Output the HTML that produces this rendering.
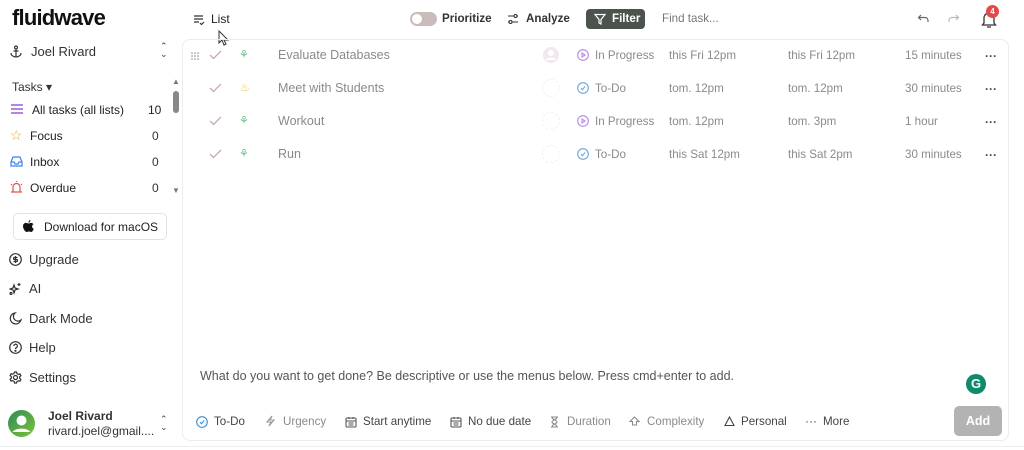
<!DOCTYPE html>
<html><head><meta charset="utf-8"><style>
*{margin:0;padding:0;box-sizing:border-box}
body{width:1024px;height:450px;background:#fff;font-family:"Liberation Sans",sans-serif;font-size:12px;color:#222;position:relative;overflow:hidden}
.a{position:absolute;white-space:nowrap}
.g{color:#8a8a8a}
.d{color:#444}
.t{font-size:11.6px}
svg{display:block}
</style></head><body>
<div class="a" style="left:12px;top:5px;font-size:22px;font-weight:bold;letter-spacing:-0.8px;color:#111">fluidwave</div>
<svg class="a" style="left:193px;top:14px" width="12" height="12" viewBox="0 0 12 12" fill="none" stroke="#333" stroke-width="1.2"><path d="M1 2h9M1 5h9M1 8h5M7 9l1.5 1.5L11 8"/></svg>
<div class="a" style="left:211px;top:12px;font-size:12px;color:#222">List</div>
<svg class="a" style="left:218px;top:30px" width="12" height="16" viewBox="0 0 12 16"><path d="M1 1v12l3-3 2 5 2-1-2-4h4z" fill="#fff" stroke="#333" stroke-width="1"/></svg>
<div class="a" style="left:410px;top:12px;width:27px;height:14px;border-radius:7px;background:#cbbcbc"></div>
<div class="a" style="left:412px;top:14px;width:10px;height:10px;border-radius:5px;background:#fff"></div>
<div class="a t" style="left:442px;top:12px;font-weight:bold;color:#333">Prioritize</div>
<svg class="a" style="left:507px;top:13px" width="12" height="12" viewBox="0 0 12 12" fill="none" stroke="#333" stroke-width="1.1"><path d="M1 3h6M10 3h1M1 9h1M5 9h6"/><circle cx="8.5" cy="3" r="1.5"/><circle cx="3.5" cy="9" r="1.5"/></svg>
<div class="a t" style="left:526px;top:12px;font-weight:bold;color:#333">Analyze</div>
<div class="a" style="left:586px;top:9px;width:59px;height:20px;border-radius:4px;background:#4b534c"></div>
<svg class="a" style="left:594px;top:13px" width="12" height="12" viewBox="0 0 12 12" fill="none" stroke="#fff" stroke-width="1.2"><path d="M1 1.5h10L7 6.5V11L5 10V6.5z"/></svg>
<div class="a t" style="left:612px;top:12px;font-weight:bold;color:#fff">Filter</div>
<div class="a t" style="left:662px;top:12px;color:#777">Find task...</div>
<svg class="a" style="left:917px;top:13px" width="13" height="12" viewBox="0 0 13 12" fill="none" stroke="#666" stroke-width="1.2"><path d="M4 2L1.5 4.5 4 7M1.5 4.5H8a3 3 0 013 3V9"/></svg>
<svg class="a" style="left:947px;top:13px" width="13" height="12" viewBox="0 0 13 12" fill="none" stroke="#bbb" stroke-width="1.2"><path d="M9 2l2.5 2.5L9 7M11.5 4.5H5a3 3 0 00-3 3V9"/></svg>
<svg class="a" style="left:980px;top:10px" width="18" height="19" viewBox="0 0 18 19" fill="none" stroke="#333" stroke-width="1.3"><path d="M4 13V8a5 5 0 0110 0v5l1.5 2h-13zM7 17h4"/></svg>
<div class="a" style="left:986px;top:5px;width:13px;height:13px;border-radius:7px;background:#e24a4a;color:#fff;font-size:8px;font-weight:bold;text-align:center;line-height:13px">4</div>
<!-- sidebar -->
<svg class="a" style="left:10px;top:45px" width="12" height="13" viewBox="0 0 12 13" fill="none" stroke="#333" stroke-width="1.2"><circle cx="6" cy="2.5" r="1.5"/><path d="M6 4v8M1 8a5 4 0 0010 0M3.5 6h5"/></svg>
<div class="a" style="left:31px;top:44px;font-size:13px;color:#333">Joel Rivard</div>
<div class="a" style="left:160px;top:42px;font-size:9px;line-height:8px;color:#444">⌃<br>⌄</div>
<div class="a" style="left:12px;top:80px;color:#333">Tasks ▾</div>
<div class="a" style="left:172px;top:77px;font-size:8px;color:#777">▲</div>
<div class="a" style="left:173px;top:91px;width:6px;height:22px;border-radius:3px;background:#888"></div>
<div class="a" style="left:172px;top:186px;font-size:8px;color:#777">▼</div>
<svg class="a" style="left:11px;top:104px" width="12" height="10" viewBox="0 0 12 10" stroke="#9a5fd6" stroke-width="1.5"><path d="M0 1h12M0 5h12M0 9h12"/></svg>
<div class="a" style="left:32px;top:103px;color:#222">All tasks (all lists)</div><div class="a" style="left:148px;top:103px;color:#222">10</div>
<div class="a" style="left:10px;top:127px;font-size:14px;color:#e0b020">☆</div>
<div class="a" style="left:30px;top:129px;color:#222">Focus</div><div class="a" style="left:152px;top:129px;color:#333">0</div>
<svg class="a" style="left:10px;top:156px" width="13" height="11" viewBox="0 0 13 11" fill="none" stroke="#3b82f6" stroke-width="1.2"><path d="M1 6l2-5h7l2 5v4H1zM1 6h3l1 2h3l1-2h3"/></svg>
<div class="a" style="left:30px;top:155px;color:#222">Inbox</div><div class="a" style="left:152px;top:155px;color:#333">0</div>
<svg class="a" style="left:10px;top:181px" width="13" height="12" viewBox="0 0 13 12" fill="none" stroke="#e05050" stroke-width="1.2"><path d="M3 11V6a3.5 3.5 0 017 0v5M1 11h11M6.5 1V0M1 3l1 1M12 3l-1 1"/></svg>
<div class="a" style="left:30px;top:181px;color:#222">Overdue</div><div class="a" style="left:152px;top:181px;color:#333">0</div>
<div class="a" style="left:13px;top:213px;width:154px;height:27px;border:1px solid #e3e3e3;border-radius:5px"></div>
<svg class="a" style="left:23px;top:220px" width="11" height="13" viewBox="0 0 11 13"><path d="M7.5 0c0 1.5-1 2.5-2 2.7C5.4 1.3 6.5.2 7.5 0zM5.5 3.5c1 0 1.7-.6 2.6-.6 1 0 1.8.5 2.3 1.3-2 1.1-1.600 3.9.4 4.6-.4 1.2-1.4 3.2-2.5 3.2-.9 0-1.1-.5-2.3-.5S4.6 12 3.7 12C2.4 12 0 9 0 6.300 0 4 1.5 2.9 2.9 2.9c1 0 1.800.6 2.6.6z" fill="#111"/></svg>
<div class="a" style="left:44px;top:220px;font-size:12px;color:#222">Download for macOS</div>
<svg class="a" style="left:9px;top:253px" width="13" height="13" viewBox="0 0 13 13" fill="none" stroke="#333" stroke-width="1.2"><circle cx="6.5" cy="6.5" r="5.8"/><path d="M8.5 4.5H5.5a1 1 0 000 2h2a1 1 0 010 2H4.5M6.5 3v7"/></svg>
<div class="a" style="left:29px;top:252px;font-size:13px;color:#333">Upgrade</div>
<svg class="a" style="left:9px;top:282px" width="13" height="13" viewBox="0 0 13 13" fill="none" stroke="#333" stroke-width="1.2"><path d="M5 3l1 3 3 1-3 1-1 3-1-3-3-1 3-1zM10 1v3M8.5 2.5h3"/><circle cx="2" cy="11.5" r="1"/></svg>
<div class="a" style="left:29px;top:281px;font-size:13px;color:#333">AI</div>
<svg class="a" style="left:9px;top:312px" width="13" height="13" viewBox="0 0 13 13" fill="none" stroke="#333" stroke-width="1.2"><path d="M6 1a5.5 5.5 0 106 7A4.5 4.5 0 016 1z"/></svg>
<div class="a" style="left:29px;top:311px;font-size:13px;color:#333">Dark Mode</div>
<svg class="a" style="left:9px;top:341px" width="13" height="13" viewBox="0 0 13 13" fill="none" stroke="#333" stroke-width="1.2"><circle cx="6.5" cy="6.5" r="5.8"/><path d="M4.8 5a1.8 1.8 0 113 1.3c-.8.5-1.3.8-1.3 1.7"/><circle cx="6.5" cy="9.8" r=".5" fill="#333"/></svg>
<div class="a" style="left:29px;top:340px;font-size:13px;color:#333">Help</div>
<svg class="a" style="left:9px;top:371px" width="13" height="13" viewBox="0 0 13 13" fill="none" stroke="#333" stroke-width="1.2"><circle cx="6.5" cy="6.5" r="2"/><path d="M5.5 1h2l.4 1.6 1.4.8 1.6-.5 1 1.7-1.2 1.2v1.6l1.2 1.2-1 1.7-1.6-.5-1.4.8L7.5 12h-2l-.4-1.6-1.4-.8-1.6.5-1-1.7 1.2-1.2V5.6L1.1 4.4l1-1.7 1.6.5 1.4-.8z"/></svg>
<div class="a" style="left:29px;top:370px;font-size:13px;color:#333">Settings</div>
<svg class="a" style="left:8px;top:410px" width="27" height="27" viewBox="0 0 27 27"><defs><linearGradient id="gg" x1="0" y1="0" x2="1" y2="1"><stop offset="0" stop-color="#2e8b57"/><stop offset="1" stop-color="#7cc33a"/></linearGradient></defs><circle cx="13.5" cy="13.5" r="13.5" fill="url(#gg)"/><circle cx="13.5" cy="10.5" r="5" fill="#fff"/><path d="M4.5 22a10 6 0 0118 0" fill="#fff"/></svg>
<div class="a" style="left:48px;top:409px;font-size:12px;font-weight:bold;color:#333">Joel Rivard</div>
<div class="a" style="left:48px;top:424px;font-size:12px;color:#333">rivard.joel@gmail....</div>
<div class="a" style="left:160px;top:415px;font-size:9px;line-height:8px;color:#444">⌃<br>⌄</div>
<!-- main panel -->
<div class="a" style="left:182px;top:39px;width:827px;height:402px;border:1px solid #ececec;border-radius:8px"></div>
<div class="a" style="left:0;top:446px;width:1024px;height:1px;background:#eee"></div>
<svg class="a" style="left:191px;top:52px" width="8" height="8" viewBox="0 0 8 8" fill="#888"><circle cx="1" cy="1" r=".8"/><circle cx="4" cy="1" r=".8"/><circle cx="7" cy="1" r=".8"/><circle cx="1" cy="4" r=".8"/><circle cx="4" cy="4" r=".8"/><circle cx="7" cy="4" r=".8"/><circle cx="1" cy="7" r=".8"/><circle cx="4" cy="7" r=".8"/><circle cx="7" cy="7" r=".8"/></svg>
<svg class="a" style="left:209px;top:50px" width="13" height="10" viewBox="0 0 13 10" fill="none" stroke="#c4aab4" stroke-width="1.3"><path d="M1 5l3.5 3.5L12 1"/></svg>
<svg class="a" style="left:209px;top:83px" width="13" height="10" viewBox="0 0 13 10" fill="none" stroke="#c4aab4" stroke-width="1.3"><path d="M1 5l3.5 3.5L12 1"/></svg>
<svg class="a" style="left:209px;top:116px" width="13" height="10" viewBox="0 0 13 10" fill="none" stroke="#c4aab4" stroke-width="1.3"><path d="M1 5l3.5 3.5L12 1"/></svg>
<svg class="a" style="left:209px;top:149px" width="13" height="10" viewBox="0 0 13 10" fill="none" stroke="#c4aab4" stroke-width="1.3"><path d="M1 5l3.5 3.5L12 1"/></svg>
<div class="a" style="left:239px;top:48px;color:#6cc28f;font-size:11px">⚘</div>
<div class="a" style="left:240px;top:81px;color:#e8c050;font-size:11px">♨</div>
<div class="a" style="left:239px;top:114px;color:#6cc28f;font-size:11px">⚘</div>
<div class="a" style="left:239px;top:147px;color:#6cc28f;font-size:11px">⚘</div>
<div class="a g" style="left:278px;top:48px;font-size:12.5px">Evaluate Databases</div>
<div class="a g" style="left:278px;top:81px;font-size:12.5px">Meet with Students</div>
<div class="a g" style="left:278px;top:114px;font-size:12.5px">Workout</div>
<div class="a g" style="left:278px;top:147px;font-size:12.5px">Run</div>
<svg class="a" style="left:542px;top:46px" width="18" height="18" viewBox="0 0 18 18"><circle cx="9" cy="9" r="8" fill="#f0e8ee"/><circle cx="9" cy="7" r="3" fill="#fff"/><path d="M3.5 14a6 4 0 0111 0" fill="#fff"/></svg>
<div class="a" style="left:542px;top:79px;width:18px;height:18px;border-radius:9px;border:1px dashed #f0f0f0"></div>
<div class="a" style="left:542px;top:112px;width:18px;height:18px;border-radius:9px;border:1px dashed #f0f0f0"></div>
<div class="a" style="left:542px;top:145px;width:18px;height:18px;border-radius:9px;border:1px dashed #f0f0f0"></div>
<svg class="a" style="left:577px;top:49px" width="12" height="12" viewBox="0 0 12 12" fill="none" stroke="#b08be0" stroke-width="1.1"><circle cx="6" cy="6" r="5.3"/><path d="M5 4v4l3-2z"/></svg>
<svg class="a" style="left:577px;top:82px" width="12" height="12" viewBox="0 0 12 12" fill="none" stroke="#6aa6d8" stroke-width="1.1"><circle cx="6" cy="6" r="5.3"/><path d="M4 6.2l1.5 1.5L8 4.5"/></svg>
<svg class="a" style="left:577px;top:115px" width="12" height="12" viewBox="0 0 12 12" fill="none" stroke="#b08be0" stroke-width="1.1"><circle cx="6" cy="6" r="5.3"/><path d="M5 4v4l3-2z"/></svg>
<svg class="a" style="left:577px;top:148px" width="12" height="12" viewBox="0 0 12 12" fill="none" stroke="#6aa6d8" stroke-width="1.1"><circle cx="6" cy="6" r="5.3"/><path d="M4 6.2l1.5 1.5L8 4.5"/></svg>
<div class="a g t" style="left:595px;top:49px">In Progress</div>
<div class="a g t" style="left:595px;top:82px">To-Do</div>
<div class="a g t" style="left:595px;top:115px">In Progress</div>
<div class="a g t" style="left:595px;top:148px">To-Do</div>
<div class="a g t" style="left:669px;top:49px">this Fri 12pm</div><div class="a g t" style="left:788px;top:49px">this Fri 12pm</div><div class="a g t" style="left:905px;top:49px">15 minutes</div>
<div class="a g t" style="left:669px;top:82px">tom. 12pm</div><div class="a g t" style="left:788px;top:82px">tom. 12pm</div><div class="a g t" style="left:905px;top:82px">30 minutes</div>
<div class="a g t" style="left:669px;top:115px">tom. 12pm</div><div class="a g t" style="left:788px;top:115px">tom. 3pm</div><div class="a g t" style="left:905px;top:115px">1 hour</div>
<div class="a g t" style="left:669px;top:148px">this Sat 12pm</div><div class="a g t" style="left:788px;top:148px">this Sat 2pm</div><div class="a g t" style="left:905px;top:148px">30 minutes</div>
<div class="a" style="left:985px;top:49px;color:#444;font-weight:bold">···</div>
<div class="a" style="left:985px;top:82px;color:#444;font-weight:bold">···</div>
<div class="a" style="left:985px;top:115px;color:#444;font-weight:bold">···</div>
<div class="a" style="left:985px;top:148px;color:#444;font-weight:bold">···</div>
<!-- input -->
<div class="a" style="left:200px;top:369px;font-size:12.5px;color:#555">What do you want to get done? Be descriptive or use the menus below. Press cmd+enter to add.</div>
<div class="a" style="left:966px;top:374px;width:20px;height:20px;border-radius:10px;background:#0f8a6a;color:#fff;font-weight:bold;font-size:13px;text-align:center;line-height:20px">G</div>
<svg class="a" style="left:196px;top:416px" width="12" height="12" viewBox="0 0 12 12" fill="none" stroke="#3b8fd8" stroke-width="1.1"><circle cx="6" cy="6" r="5.3"/><path d="M4 6.2l1.5 1.5L8 4.5"/></svg>
<div class="a d t" style="left:214px;top:415px">To-Do</div>
<svg class="a" style="left:265px;top:415px" width="11" height="12" viewBox="0 0 11 12" fill="none" stroke="#999" stroke-width="1.1"><path d="M7 1L2 7h4l-2 4 5-6H5z"/></svg>
<div class="a g t" style="left:283px;top:415px">Urgency</div>
<svg class="a" style="left:345px;top:416px" width="12" height="12" viewBox="0 0 12 12" fill="none" stroke="#555" stroke-width="1.1"><rect x="1" y="2" width="10" height="9" rx="1"/><path d="M1 5h10M4 1v2M8 1v2M3.5 7h5M3.5 9h5"/></svg>
<div class="a d t" style="left:363px;top:415px">Start anytime</div>
<svg class="a" style="left:450px;top:416px" width="12" height="12" viewBox="0 0 12 12" fill="none" stroke="#555" stroke-width="1.1"><rect x="1" y="2" width="10" height="9" rx="1"/><path d="M1 5h10M4 1v2M8 1v2M3.5 7h5M3.5 9h5"/></svg>
<div class="a d t" style="left:468px;top:415px">No due date</div>
<svg class="a" style="left:550px;top:416px" width="9" height="12" viewBox="0 0 9 12" fill="none" stroke="#888" stroke-width="1.1"><path d="M1 1h7M1 11h7M2 1c0 3 5 3 5 5s-5 2-5 5M7 1c0 3-5 3-5 5s5 2 5 5"/></svg>
<div class="a g t" style="left:567px;top:415px">Duration</div>
<svg class="a" style="left:629px;top:416px" width="11" height="11" viewBox="0 0 11 11" fill="none" stroke="#888" stroke-width="1.1"><path d="M5.5 1L10 5.5H7.5V9h-4V5.5H1z"/></svg>
<div class="a g t" style="left:647px;top:415px">Complexity</div>
<svg class="a" style="left:724px;top:416px" width="11" height="11" viewBox="0 0 11 11" fill="none" stroke="#444" stroke-width="1.1"><path d="M5.5 1L10 9.5H1z"/></svg>
<div class="a d t" style="left:741px;top:415px">Personal</div>
<div class="a d" style="left:805px;top:414px">···</div>
<div class="a d t" style="left:823px;top:415px">More</div>
<div class="a" style="left:954px;top:406px;width:48px;height:30px;border-radius:5px;background:#b3b3b3;color:#fff;font-weight:bold;font-size:12.5px;text-align:center;line-height:30px">Add</div>
</body></html>
